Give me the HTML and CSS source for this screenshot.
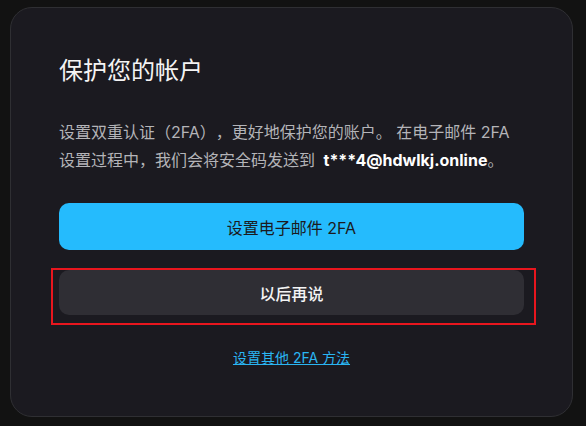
FILE: index.html
```html
<!DOCTYPE html>
<html lang="zh-CN">
<head>
    <meta charset="UTF-8">
    <meta name="viewport" content="width=device-width, initial-scale=1.0">
    <title>保护您的帐户</title>
    <link rel="stylesheet" href="styles.css">
</head>
<body>
    <div class="card">
        <h2 class="title">保护您的帐户</h2>
        <p class="desc">设置双重认证（2FA），更好地保护您的账户。 在电子邮件 2FA 设置过程中，我们会将安全码发送到 <b>t***4@hdwlkj.online</b>。</p>
        <button class="btn btn-primary">设置电子邮件 2FA</button>
        <div class="highlight">
            <button class="btn btn-secondary">以后再说</button>
        </div>
        <div class="other">
            <a href="#" class="other-link">设置其他 2FA 方法</a>
        </div>
    </div>
</body>
</html>
```

FILE: styles.css
```css
body {
    margin: 0;
    padding: 7px 13px 9px 10px;
    background-color: #121212;
    font-family: Inter, "Noto Sans CJK SC", sans-serif;
}
.card {
    box-sizing: border-box;
    height: 410px;
    padding: 47px 48px 0 48px;
    background-color: #1b1a20;
    border: 1px solid #2f2f33;
    border-radius: 22px;
}
.title {
    margin: 0;
    font-size: 24px;
    font-weight: 400;
    line-height: 32px;
    color: #f4f4f4;
}
.desc {
    margin: 31px 0 0 0;
    font-size: 16px;
    line-height: 28px;
    color: #b4b4b8;
    text-spacing-trim: space-all;
}
.desc b {
    margin-left: 4px;
    color: #ffffff;
    font-weight: 700;
}
.btn {
    display: block;
    width: 100%;
    border: none;
    border-radius: 10px;
    font-family: Inter, "Noto Sans CJK SC", sans-serif;
    font-size: 16px;
    cursor: pointer;
}
.btn-primary {
    margin-top: 29px;
    height: 47px;
    background-color: #25bbfd;
    color: #1b1a20;
}
.highlight {
    margin: 18px -12px 0 -8px;
    padding: 0 10px 8px 6px;
    border: 2px solid #e8161e;
}
.btn-secondary {
    height: 45px;
    background-color: #2f2e34;
    color: #f4f4f4;
    font-weight: 500;
}
.other {
    margin-top: 22px;
    text-align: center;
}
.other-link {
    font-size: 14px;
    line-height: 18px;
    color: #2ab5f2;
    text-decoration: underline;
}
```
